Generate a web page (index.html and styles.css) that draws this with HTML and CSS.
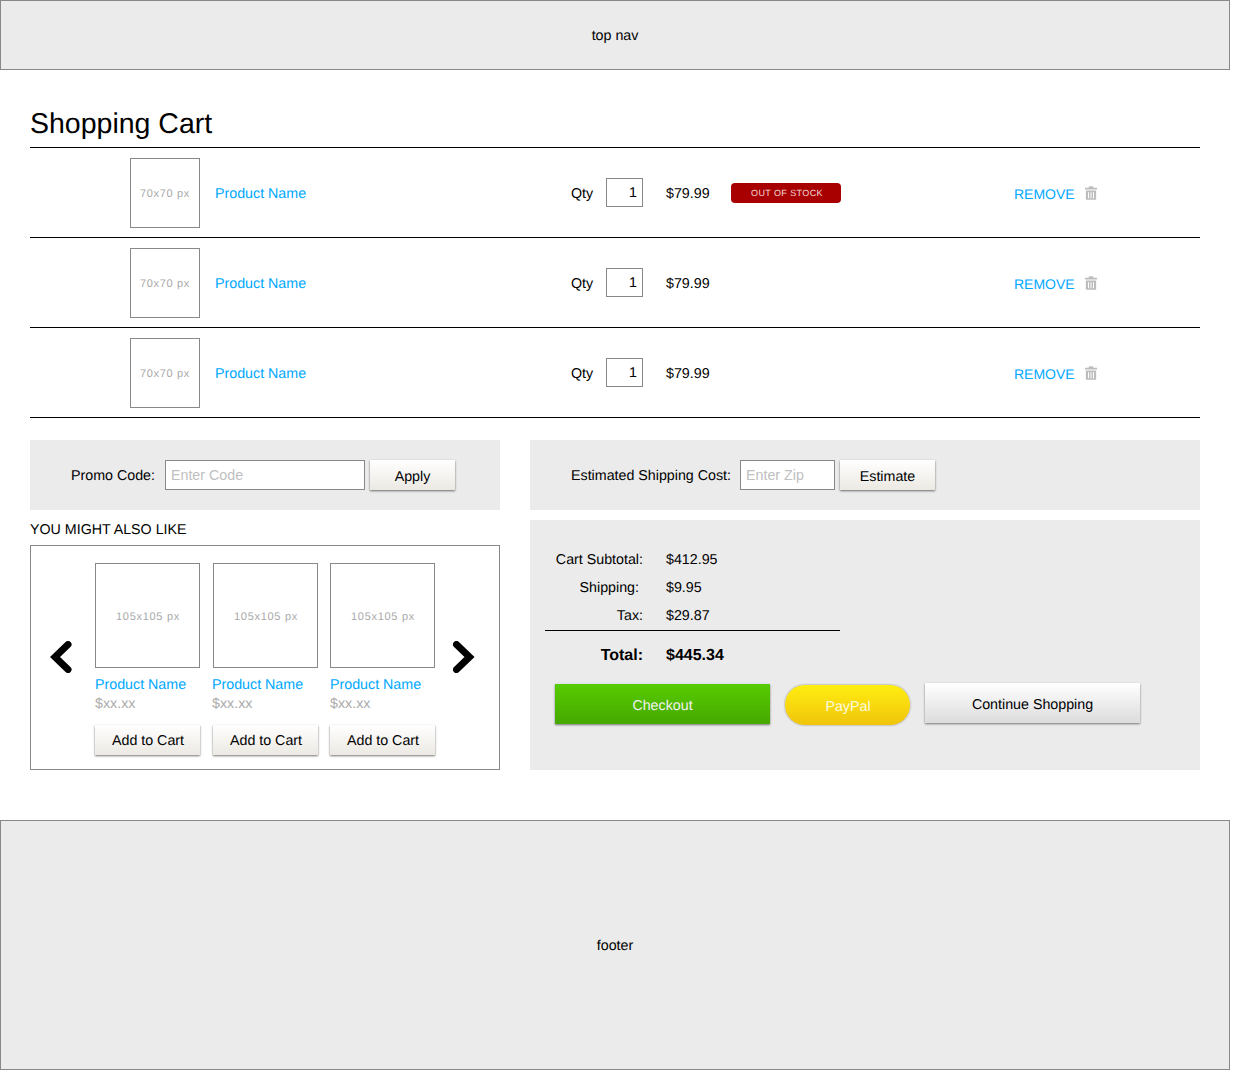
FILE: index.html
```html
<!DOCTYPE html>
<html lang="en">
<head>
<meta charset="utf-8">
<title>Shopping Cart</title>
<link rel="stylesheet" href="styles.css">
</head>
<body>
<header class="bar top-nav">top nav</header>
<main class="page">
  <h1 class="title">Shopping Cart</h1>
  <ul class="cart">
    <li class="row">
      <div class="thumb">70x70 px</div>
      <a class="link row-name">Product Name</a>
      <span class="qty-label">Qty</span>
      <span class="qty">1</span>
      <span class="price">$79.99</span>
      <span class="status"><span class="badge">OUT OF STOCK</span></span>
      <a class="remove">REMOVE</a>
      <svg class="trash" viewBox="0 0 14 16"><path d="M5 0h4l1 2h4v2H0V2h4zM1 5h12v11H1zM3.500 7v7h1.200V7zM6.400 7v7h1.200V7zM9.300 7v7h1.200V7z" fill-rule="evenodd"/></svg>
    </li>
    <li class="row">
      <div class="thumb">70x70 px</div>
      <a class="link row-name">Product Name</a>
      <span class="qty-label">Qty</span>
      <span class="qty">1</span>
      <span class="price">$79.99</span>
      <span class="status"></span>
      <a class="remove">REMOVE</a>
      <svg class="trash" viewBox="0 0 14 16"><path d="M5 0h4l1 2h4v2H0V2h4zM1 5h12v11H1zM3.500 7v7h1.200V7zM6.400 7v7h1.200V7zM9.300 7v7h1.200V7z" fill-rule="evenodd"/></svg>
    </li>
    <li class="row">
      <div class="thumb">70x70 px</div>
      <a class="link row-name">Product Name</a>
      <span class="qty-label">Qty</span>
      <span class="qty">1</span>
      <span class="price">$79.99</span>
      <span class="status"></span>
      <a class="remove">REMOVE</a>
      <svg class="trash" viewBox="0 0 14 16"><path d="M5 0h4l1 2h4v2H0V2h4zM1 5h12v11H1zM3.500 7v7h1.200V7zM6.400 7v7h1.200V7zM9.300 7v7h1.200V7z" fill-rule="evenodd"/></svg>
    </li>
  </ul>
  <div class="lower">
    <section class="panel form-panel promo">
      <label class="form-label">Promo Code:</label>
      <input class="field promo-field" placeholder="Enter Code">
      <button class="btn btn-light apply">Apply</button>
    </section>
    <section class="panel form-panel shipping">
      <label class="form-label">Estimated Shipping Cost:</label>
      <input class="field zip-field" placeholder="Enter Zip">
      <button class="btn btn-light apply estimate">Estimate</button>
    </section>
    <section class="also">
      <h2 class="also-title">YOU MIGHT ALSO LIKE</h2>
      <div class="carousel">
        <svg class="chevron" viewBox="0 0 22 32"><path d="M18 3.500 5 16l13 12.500" fill="none" stroke="#000" stroke-width="7" stroke-linecap="round" stroke-linejoin="miter"/></svg>
        <div class="items">
          <article class="item">
            <div class="thumb-lg">105x105 px</div>
            <a class="link item-name">Product Name</a>
            <span class="item-price">$xx.xx</span>
            <button class="btn btn-light add">Add to Cart</button>
          </article>
          <article class="item item-mid">
            <div class="thumb-lg">105x105 px</div>
            <a class="link item-name nudge">Product Name</a>
            <span class="item-price nudge">$xx.xx</span>
            <button class="btn btn-light add">Add to Cart</button>
          </article>
          <article class="item">
            <div class="thumb-lg">105x105 px</div>
            <a class="link item-name">Product Name</a>
            <span class="item-price">$xx.xx</span>
            <button class="btn btn-light add">Add to Cart</button>
          </article>
        </div>
        <svg class="chevron chevron-next" viewBox="0 0 22 32"><path d="M3.500 3.500 16.500 16 3.500 28.500" fill="none" stroke="#000" stroke-width="7" stroke-linecap="round" stroke-linejoin="miter"/></svg>
      </div>
    </section>
    <section class="panel summary">
      <dl class="totals">
        <dt class="sum-label">Cart Subtotal:</dt><dd class="sum-value">$412.95</dd>
        <dt class="sum-label shipping-label">Shipping:</dt><dd class="sum-value">$9.95</dd>
        <dt class="sum-label">Tax:</dt><dd class="sum-value">$29.87</dd>
      </dl>
      <div class="total">
        <span class="total-label">Total:</span>
        <span class="total-value">$445.34</span>
      </div>
      <div class="actions">
        <button class="btn checkout">Checkout</button>
        <button class="btn paypal">PayPal</button>
        <button class="btn continue">Continue Shopping</button>
      </div>
    </section>
  </div>
</main>
<footer class="bar footer">footer</footer>
</body>
</html>
```
FILE: styles.css
```css
* { box-sizing: border-box; }
html, body { margin: 0; padding: 0; }
body {
  width: 1230px;
  height: 1090px;
  background: #fff;
  color: #000;
  font-family: "Liberation Sans", Arial, sans-serif;
  font-size: 14.25px;
  text-rendering: geometricPrecision;
}
.bar {
  display: flex;
  align-items: center;
  justify-content: center;
  padding-top: 2px;
  background: #ebebeb;
  border: 1px solid #888;
}
.top-nav { height: 70px; }
.footer { height: 250px; margin-top: 50px; }
.page { padding: 0 30px; }
.title {
  margin: 0;
  height: 78px;
  padding-top: 36px;
  border-bottom: 1px solid #000;
  font-size: 28.5px;
  font-weight: 400;
  line-height: 36px;
}
.cart { list-style: none; margin: 0; padding: 0; }
.row {
  display: flex;
  align-items: center;
  height: 90px;
  padding: 0 0 0 100px;
  border-bottom: 1px solid #000;
}
.thumb {
  display: flex;
  align-items: center;
  justify-content: center;
  flex: none;
  width: 70px;
  height: 70px;
  padding-top: 2px;
  background: #fff;
  border: 1px solid #888;
  color: #a8a8a8;
  font-size: 11px;
  letter-spacing: .65px;
}
.link { color: #00a8ff; }
.row-name { width: 356px; margin-left: 15px; padding-top: 2px; }
.qty-label { width: 35px; padding-top: 2px; }
.qty {
  width: 37px;
  height: 29px;
  padding-right: 5px;
  border: 1px solid #888;
  line-height: 29px;
  text-align: right;
}
.price { width: 65px; margin-left: 23px; padding-top: 2px; }
.status { width: 283px; display: flex; }
.badge {
  display: block;
  width: 110px;
  height: 20px;
  padding-left: 2px;
  border-radius: 4px;
  background: #a80000;
  color: #f3dada;
  font-size: 9px;
  letter-spacing: .4px;
  line-height: 20px;
  text-align: center;
}
.remove { width: 71px; padding-top: 2px; color: #00a8ff; font-size: 14px; }
.trash { width: 12px; height: 16px; fill: #bdbdbd; }
.lower {
  display: grid;
  grid-template-columns: 470px 670px;
  grid-template-rows: 70px 250px;
  column-gap: 30px;
  row-gap: 10px;
  margin-top: 22px;
}
.panel { background: #ebebeb; }
.form-panel { display: flex; align-items: center; }
.promo { padding-left: 41px; }
.shipping { padding-left: 41px; }
.form-label { margin-right: 10px; padding-top: 2px; }
.shipping .form-label { margin-right: 9px; }
.field {
  height: 30px;
  padding: 0 5px;
  background: #fff;
  border: 1px solid #888;
  border-radius: 0;
  font: 14.25px "Liberation Sans", Arial, sans-serif;
  outline: 0;
}
.field::placeholder { color: #c0c0c0; opacity: 1; }
.promo-field { width: 200px; }
.zip-field { width: 95px; }
.btn {
  display: block;
  border: 0;
  padding: 0;
  font: 14.25px "Liberation Sans", Arial, sans-serif;
  text-rendering: geometricPrecision;
  cursor: pointer;
}
.btn-light {
  height: 30px;
  background: linear-gradient(#fff, #ece9e3);
  color: #000;
  box-shadow: 0 1px 2px rgba(0, 0, 0, .55);
}
.apply { width: 85px; margin-left: 5px; padding-top: 4px; }
.estimate { width: 95px; }
.also { margin-top: -10px; }
.also-title {
  margin: 0;
  height: 35px;
  padding-top: 11px;
  font-size: 14.25px;
  font-weight: 400;
  line-height: 18px;
}
.carousel {
  display: flex;
  height: 225px;
  padding: 17px 0 0 19px;
  border: 1px solid #888;
}
.chevron { flex: none; width: 22px; height: 32px; margin-top: 78px; }
.chevron-next { margin-left: 18px; }
.items { display: flex; margin-left: 23px; }
.item { display: flex; flex-direction: column; width: 105px; margin-right: 12px; }
.item-mid { margin-left: 1px; }
.item:last-child { margin-right: 0; }
.thumb-lg {
  display: flex;
  align-items: center;
  justify-content: center;
  height: 105px;
  padding: 2px 0 0 1px;
  border: 1px solid #888;
  color: #a8a8a8;
  font-size: 11px;
  letter-spacing: .7px;
}
.item-name { margin-top: 8px; line-height: 18px; white-space: nowrap; }
.item-price { margin-top: 1px; color: #aaa; line-height: 18px; }
.nudge { margin-left: -1px; }
.add { width: 105px; margin-top: 12px; padding: 2px 0 0 1px; }
.summary { padding: 26px 15px 0; }
.totals {
  display: grid;
  grid-template-columns: 98px 174px;
  grid-auto-rows: 28px;
  column-gap: 23px;
  width: 295px;
  height: 85px;
  margin: 0;
  border-bottom: 1px solid #000;
  align-items: center;
  align-content: start;
}
.sum-label { text-align: right; }
.shipping-label { padding-right: 4px; }
.sum-value { margin: 0; }
.total {
  display: grid;
  grid-template-columns: 98px auto;
  column-gap: 23px;
  margin-top: 15px;
  font-size: 16px;
  font-weight: 700;
  line-height: 20px;
}
.total-label { text-align: right; }
.actions { display: flex; align-items: flex-start; margin-top: 17px; padding-left: 10px; }
.checkout {
  width: 215px;
  height: 40px;
  margin-top: 1px;
  padding-top: 4px;
  background: linear-gradient(#57cc00, #46a800);
  color: #f2f2f2;
  box-shadow: 0 1px 2px rgba(0, 0, 0, .5);
}
.paypal {
  width: 125px;
  height: 40px;
  margin: 2px 0 0 15px;
  padding: 4px 0 0 1px;
  border-radius: 20px;
  background: linear-gradient(#ffee10, #f0c40c);
  color: #fbfbe0;
  box-shadow: 0 0 2px rgba(0, 0, 0, .5);
}
.continue {
  width: 215px;
  height: 40px;
  margin-left: 15px;
  padding-top: 4px;
  background: linear-gradient(#fff, #dcdcdc);
  color: #000;
  box-shadow: 0 1px 2px rgba(0, 0, 0, .5);
}
```
